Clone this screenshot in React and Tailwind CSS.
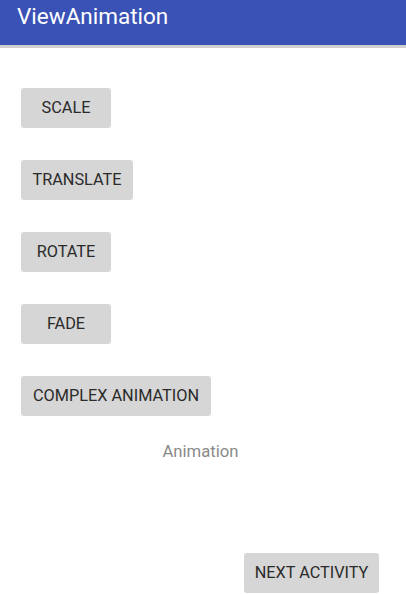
import React from 'react';

const Btn = ({ children, className = '' }) => (
    <button
        type="button"
        className={`h-10 rounded-[3px] bg-[#d6d6d6] text-[16.3px] leading-none font-normal text-[#2a2a2a] ${className}`}
    >
        {children}
    </button>
);

export default function App() {
    const items = ['SCALE', 'TRANSLATE', 'ROTATE', 'FADE', 'COMPLEX ANIMATION'];
    const widths = ['w-[90px]', 'w-[112px]', 'w-[90px]', 'w-[90px]', 'w-[190px]'];

    return (
        <div className="flex h-[594px] w-[406px] flex-col bg-white font-['Roboto',sans-serif]">
            {/* Toolbar */}
            <div className="h-[45px] shrink-0 bg-[#3a52b5] pl-[17px] pt-[1px] text-[22.5px] leading-[30px] text-white">
                ViewAnimation
            </div>
            <div className="h-[3px] shrink-0 bg-[#d0d0d0]" />

            {/* Buttons */}
            <div className="flex flex-col gap-8 pl-[21px] pt-10">
                {items.map((label, i) => (
                    <Btn key={label} className={widths[i]}>{label}</Btn>
                ))}
            </div>

            <div className="mt-[26px] flex justify-center pr-[5px] text-[16.7px] leading-[20px] text-[#8a8a8a]">
                Animation
            </div>

            <div className="mt-auto flex justify-end pb-[1px] pr-[27px]">
                <Btn className="w-[135px]">NEXT ACTIVITY</Btn>
            </div>
        </div>
    );
}
